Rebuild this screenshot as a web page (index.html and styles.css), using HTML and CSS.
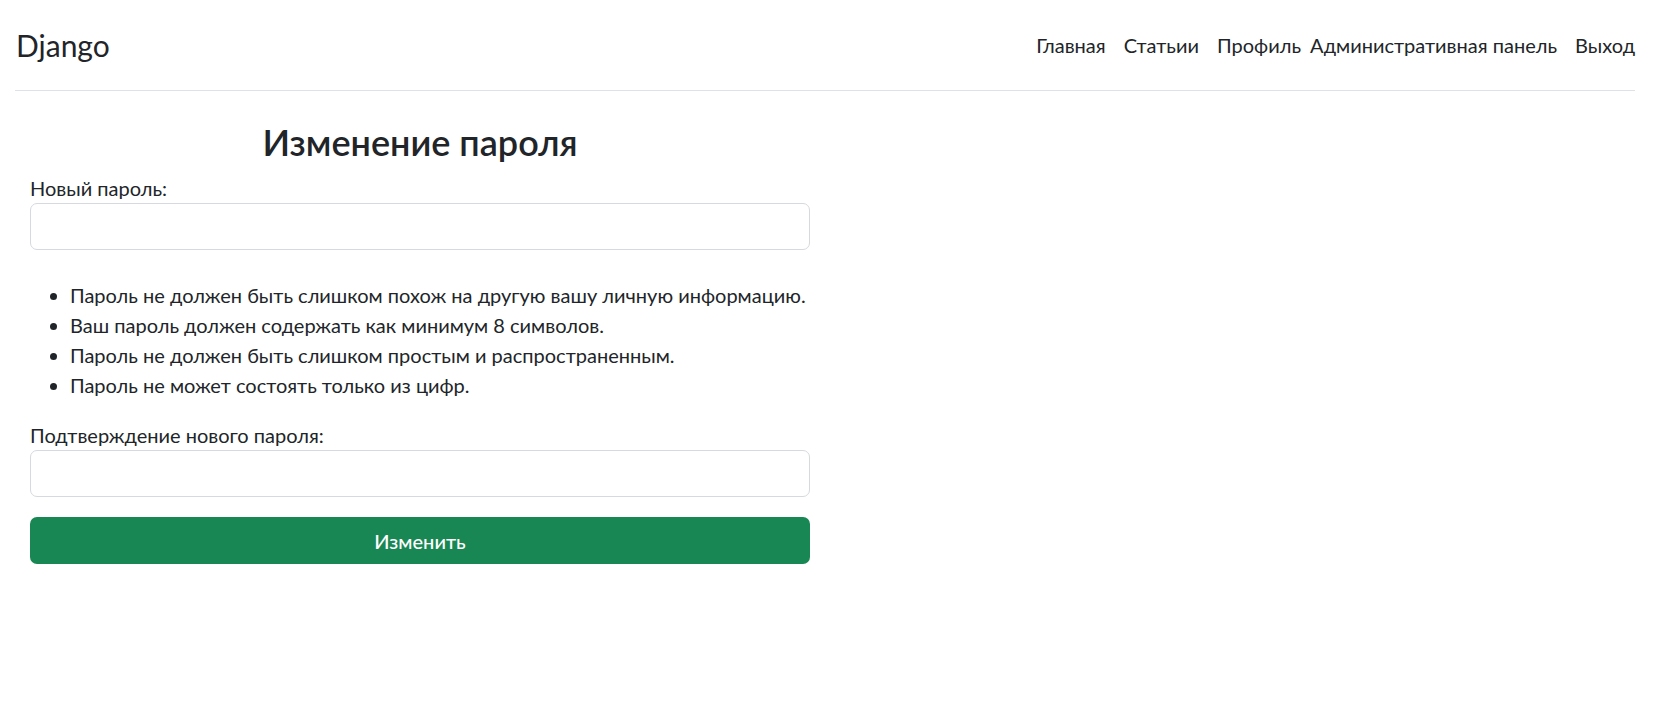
FILE: index.html
```html
<!DOCTYPE html>
<html lang="ru">
<head>
<meta charset="utf-8">
<title>Изменение пароля</title>
<link rel="stylesheet" href="styles.css">
</head>
<body>
<header class="site-header">
  <a class="brand" href="#">Django</a>
  <nav class="nav">
    <a class="nav-link" href="#">Главная</a>
    <a class="nav-link" href="#">Статьии</a>
    <a class="nav-link" href="#">Профиль</a>
    <a class="nav-link flush-left" href="#">Административная панель</a>
    <a class="nav-link flush-right" href="#">Выход</a>
  </nav>
</header>
<main class="main">
  <form class="pw-form">
    <h3 class="title">Изменение пароля</h3>
    <label class="label" for="p1">Новый пароль:</label>
    <input class="control" type="password" id="p1">
    <ul class="help">
      <li>Пароль не должен быть слишком похож на другую вашу личную информацию.</li>
      <li>Ваш пароль должен содержать как минимум 8 символов.</li>
      <li>Пароль не должен быть слишком простым и распространенным.</li>
      <li>Пароль не может состоять только из цифр.</li>
    </ul>
    <label class="label" for="p2">Подтверждение нового пароля:</label>
    <input class="control" type="password" id="p2">
    <button class="btn-submit" type="submit">Изменить</button>
  </form>
</main>
</body>
</html>
```
FILE: styles.css
```css
html, body {
  margin: 0;
  padding: 0;
  background: #fff;
}
body {
  font-family: Lato, "Noto Sans", sans-serif;
  font-size: 20px;
  line-height: 1.5;
  color: #212529;
}
a {
  color: #212529;
  text-decoration: none;
}
.site-header {
  display: flex;
  justify-content: space-between;
  align-items: center;
  margin: 0 33px 30px 15px;
  padding: 20px 0;
  border-bottom: 1px solid #dee2e6;
}
.brand {
  font-size: 30px;
  line-height: 45px;
  padding-left: 1px;
}
.nav {
  display: flex;
  align-items: center;
}
.nav-link {
  display: block;
  padding: 10px 9px;
  line-height: 30px;
}
.nav-link.flush-left {
  padding-left: 0;
}
.nav-link.flush-right {
  padding-right: 0;
}
.main {
  padding: 0 30px;
}
.pw-form {
  width: 780px;
}
.title {
  margin: 0 0 10px;
  font-size: 36px;
  font-weight: 600;
  line-height: 42px;
  text-align: center;
}
.label {
  display: block;
  line-height: 30px;
}
.control {
  display: block;
  box-sizing: border-box;
  width: 100%;
  height: 47px;
  margin: 0;
  padding: 7px 15px;
  border: 1px solid #d6d9de;
  border-radius: 7px;
  font: inherit;
  background: #fff;
}
.help {
  margin: 30px 0 20px;
  padding-left: 40px;
  line-height: 30px;
}
.btn-submit {
  display: block;
  box-sizing: border-box;
  width: 100%;
  height: 47px;
  margin-top: 20px;
  border: 0;
  border-radius: 7px;
  background: #198754;
  color: #fff;
  font-family: inherit;
  font-size: 20px;
  font-weight: 500;
  line-height: 30px;
}
```
